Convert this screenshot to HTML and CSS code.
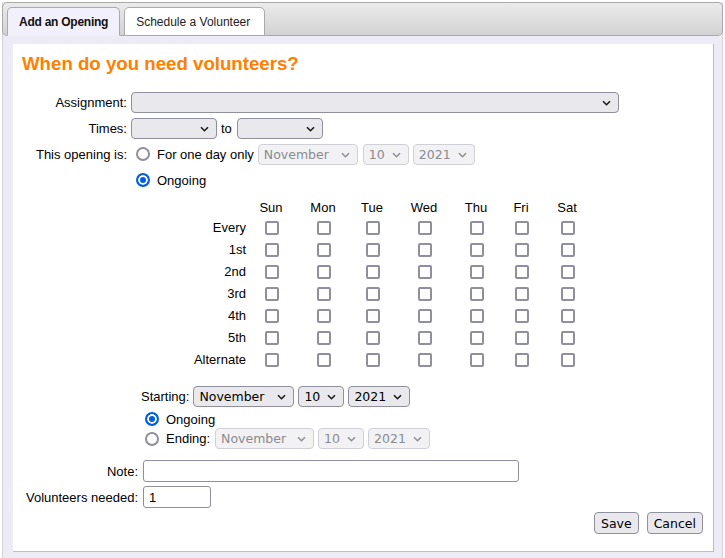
FILE: index.html
```html
<!DOCTYPE html>
<html>
<head>
<meta charset="utf-8">
<link rel="stylesheet" href="styles.css">
</head>
<body>
<div class="widget">
  <div class="tabbar">
    <div class="tab active">Add an Opening</div>
    <div class="tab">Schedule a Volunteer</div>
  </div>
  <div class="panel">
    <div class="card">
      <h2 class="title">When do you need volunteers?</h2>

      <div class="form-top">
        <label class="lbl">Assignment:</label>
        <div class="ctl">
          <span class="sel w-assign"><select><option></option></select><svg class="chev" width="9" height="6" viewBox="0 0 9 6"><path d="M1 1.2L4.5 4.7L8 1.2"/></svg></span>
        </div>

        <label class="lbl">Times:</label>
        <div class="ctl">
          <span class="sel w-time"><select><option></option></select><svg class="chev" width="9" height="6" viewBox="0 0 9 6"><path d="M1 1.2L4.5 4.7L8 1.2"/></svg></span>
          <span class="to">to</span>
          <span class="sel w-time"><select><option></option></select><svg class="chev" width="9" height="6" viewBox="0 0 9 6"><path d="M1 1.2L4.5 4.7L8 1.2"/></svg></span>
        </div>

        <label class="lbl">This opening is:</label>
        <div class="ctl">
          <input type="radio" name="kind" class="radio r-first">
          <span class="rtext">For one day only</span>
          <span class="sel w-month dis"><select disabled><option>November</option></select><svg class="chev" width="9" height="6" viewBox="0 0 9 6"><path d="M1 1.2L4.5 4.7L8 1.2"/></svg></span>
          <span class="sel w-day dis"><select disabled><option>10</option></select><svg class="chev" width="9" height="6" viewBox="0 0 9 6"><path d="M1 1.2L4.5 4.7L8 1.2"/></svg></span>
          <span class="sel w-year dis"><select disabled><option>2021</option></select><svg class="chev" width="9" height="6" viewBox="0 0 9 6"><path d="M1 1.2L4.5 4.7L8 1.2"/></svg></span>
        </div>

        <span></span>
        <div class="ctl">
          <input type="radio" name="kind" class="radio r-first" checked>
          <span class="rtext2">Ongoing</span>
        </div>
      </div>

      <div class="days">
        <span></span>
        <span class="dh">Sun</span><span class="dh">Mon</span><span class="dh">Tue</span><span class="dh">Wed</span><span class="dh">Thu</span><span class="dh">Fri</span><span class="dh">Sat</span>

        <span class="rl">Every</span>
        <span class="dc"><input type="checkbox" class="cb"></span><span class="dc"><input type="checkbox" class="cb"></span><span class="dc"><input type="checkbox" class="cb"></span><span class="dc"><input type="checkbox" class="cb"></span><span class="dc"><input type="checkbox" class="cb"></span><span class="dc"><input type="checkbox" class="cb"></span><span class="dc"><input type="checkbox" class="cb"></span>

        <span class="rl">1st</span>
        <span class="dc"><input type="checkbox" class="cb"></span><span class="dc"><input type="checkbox" class="cb"></span><span class="dc"><input type="checkbox" class="cb"></span><span class="dc"><input type="checkbox" class="cb"></span><span class="dc"><input type="checkbox" class="cb"></span><span class="dc"><input type="checkbox" class="cb"></span><span class="dc"><input type="checkbox" class="cb"></span>

        <span class="rl">2nd</span>
        <span class="dc"><input type="checkbox" class="cb"></span><span class="dc"><input type="checkbox" class="cb"></span><span class="dc"><input type="checkbox" class="cb"></span><span class="dc"><input type="checkbox" class="cb"></span><span class="dc"><input type="checkbox" class="cb"></span><span class="dc"><input type="checkbox" class="cb"></span><span class="dc"><input type="checkbox" class="cb"></span>

        <span class="rl">3rd</span>
        <span class="dc"><input type="checkbox" class="cb"></span><span class="dc"><input type="checkbox" class="cb"></span><span class="dc"><input type="checkbox" class="cb"></span><span class="dc"><input type="checkbox" class="cb"></span><span class="dc"><input type="checkbox" class="cb"></span><span class="dc"><input type="checkbox" class="cb"></span><span class="dc"><input type="checkbox" class="cb"></span>

        <span class="rl">4th</span>
        <span class="dc"><input type="checkbox" class="cb"></span><span class="dc"><input type="checkbox" class="cb"></span><span class="dc"><input type="checkbox" class="cb"></span><span class="dc"><input type="checkbox" class="cb"></span><span class="dc"><input type="checkbox" class="cb"></span><span class="dc"><input type="checkbox" class="cb"></span><span class="dc"><input type="checkbox" class="cb"></span>

        <span class="rl">5th</span>
        <span class="dc"><input type="checkbox" class="cb"></span><span class="dc"><input type="checkbox" class="cb"></span><span class="dc"><input type="checkbox" class="cb"></span><span class="dc"><input type="checkbox" class="cb"></span><span class="dc"><input type="checkbox" class="cb"></span><span class="dc"><input type="checkbox" class="cb"></span><span class="dc"><input type="checkbox" class="cb"></span>

        <span class="rl">Alternate</span>
        <span class="dc"><input type="checkbox" class="cb"></span><span class="dc"><input type="checkbox" class="cb"></span><span class="dc"><input type="checkbox" class="cb"></span><span class="dc"><input type="checkbox" class="cb"></span><span class="dc"><input type="checkbox" class="cb"></span><span class="dc"><input type="checkbox" class="cb"></span><span class="dc"><input type="checkbox" class="cb"></span>
      </div>

      <div class="starting">
        <span class="start-lbl">Starting:</span>
        <span class="sel w-month2"><select><option>November</option></select><svg class="chev" width="9" height="6" viewBox="0 0 9 6"><path d="M1 1.2L4.5 4.7L8 1.2"/></svg></span>
        <span class="sel w-day"><select><option>10</option></select><svg class="chev" width="9" height="6" viewBox="0 0 9 6"><path d="M1 1.2L4.5 4.7L8 1.2"/></svg></span>
        <span class="sel w-year"><select><option>2021</option></select><svg class="chev" width="9" height="6" viewBox="0 0 9 6"><path d="M1 1.2L4.5 4.7L8 1.2"/></svg></span>
      </div>

      <div class="endopts">
        <div class="endrow short">
          <input type="radio" name="end" class="radio" checked>
          <span class="etext">Ongoing</span>
        </div>
        <div class="endrow">
          <input type="radio" name="end" class="radio">
          <span class="etext">Ending:</span>
          <span class="sel w-month3 dis"><select disabled><option>November</option></select><svg class="chev" width="9" height="6" viewBox="0 0 9 6"><path d="M1 1.2L4.5 4.7L8 1.2"/></svg></span>
          <span class="sel w-day dis"><select disabled><option>10</option></select><svg class="chev" width="9" height="6" viewBox="0 0 9 6"><path d="M1 1.2L4.5 4.7L8 1.2"/></svg></span>
          <span class="sel w-year dis"><select disabled><option>2021</option></select><svg class="chev" width="9" height="6" viewBox="0 0 9 6"><path d="M1 1.2L4.5 4.7L8 1.2"/></svg></span>
        </div>
      </div>

      <div class="form-bottom">
        <label class="lbl">Note:</label>
        <div class="ctl"><input type="text" class="txt w-note"></div>
        <label class="lbl">Volunteers needed:</label>
        <div class="ctl"><input type="text" class="txt w-count" value="1"></div>
      </div>

      <div class="actions">
        <button class="btn">Save</button>
        <button class="btn">Cancel</button>
      </div>
    </div>
  </div>
</div>
</body>
</html>
```

FILE: styles.css
```css
html, body {
  margin: 0;
  padding: 0;
  background: #ffffff;
}
body {
  font-family: "Liberation Sans", Arial, sans-serif;
  font-size: 13px;
  color: #000;
}
.widget {
  margin: 2px 0 0 2px;
  width: 721px;
  box-sizing: border-box;
  border-left: 1px solid #d2d2d8;
  border-right: 1px solid #d2d2d8;
  background: #edebf5;
}
.tabbar {
  margin: 0 -1px;
  height: 34px;
  box-sizing: border-box;
  border: 1px solid #aaaaaa;
  border-radius: 5px;
  background: linear-gradient(#ebebeb, #d2d2d2);
  display: flex;
  align-items: flex-end;
  padding: 4px 0 0 4px;
  gap: 4px;
}
.tab {
  height: 29px;
  box-sizing: border-box;
  margin-bottom: -1px;
  border: 1px solid #aaaaaa;
  border-radius: 5px 5px 0 0;
  padding: 0 14px 0 11px;
  display: flex;
  align-items: center;
  font-size: 12px;
  color: #222;
  background: #ffffff;
  border-bottom-color: #aaaaaa;
}
.tab.active {
  background: #f2f0fa;
  font-weight: bold;
  border-bottom-color: #f2f0fa;
  color: #111;
  padding: 0 11px;
  letter-spacing: -0.25px;
}
.panel {
  padding: 8px 8px 12px 10px;
}
.card {
  background: #ffffff;
  border-right: 1px solid #bdbdc2;
  border-bottom: 1px solid #bdbdc2;
  padding: 8px 10px 17px 9px;
}
.title {
  margin: 1px 0 0 0;
  font-size: 18.67px;
  line-height: 22px;
  font-weight: bold;
  color: #ff8000;
}
.form-top {
  margin-top: 16px;
  display: grid;
  grid-template-columns: 105px 1fr;
  column-gap: 4px;
  row-gap: 4px;
  grid-auto-rows: 22px;
}
.lbl {
  text-align: right;
  display: flex;
  align-items: center;
  justify-content: flex-end;
  white-space: nowrap;
}
.ctl {
  display: flex;
  align-items: center;
}
.to {
  margin: 0 5px 0 4px;
}
.sel {
  position: relative;
  display: inline-flex;
  height: 21px;
}
.sel select {
  appearance: none;
  -webkit-appearance: none;
  width: 100%;
  height: 21px;
  margin: 0;
  box-sizing: border-box;
  border: 1px solid #8f8f9d;
  border-radius: 4px;
  background: #e9e9ed;
  color: #000;
  font-family: "DejaVu Sans", Verdana, sans-serif;
  font-size: 12.5px;
  padding: 0 18px 0 5px;
}
.sel .chev {
  position: absolute;
  right: 8px;
  top: 8px;
  pointer-events: none;
  fill: none;
  stroke: #1a1a1a;
  stroke-width: 1.6;
}
.sel.dis select {
  background: #f2f2f4;
  border-color: #d0d0d7;
  color: #8a8a90;
  opacity: 1;
}
.sel.dis .chev {
  stroke: #909096;
}
.w-assign { width: 488px; }
.w-time { width: 86px; }
.w-month { width: 100px; margin-right: 5px; }
.w-day { width: 46px; margin-right: 4px; }
.w-year { width: 62px; }
.w-month2 { width: 101px; margin-right: 4px; }
.w-month3 { width: 99px; margin-right: 4px; }

.radio {
  appearance: none;
  -webkit-appearance: none;
  width: 14px;
  height: 14px;
  margin: 0;
  box-sizing: border-box;
  border: 2px solid #8f8f9d;
  border-radius: 50%;
  background: #fff;
  flex: none;
}
.radio:checked {
  border-color: #0060df;
  background: #0060df;
  box-shadow: inset 0 0 0 2px #fff;
}
.r-first {
  margin-left: 5px;
}
.rtext {
  margin-left: 7px;
  margin-right: 4px;
}
.rtext2 {
  margin-left: 7px;
}

.days {
  margin: 7px 0 0 164px;
  display: grid;
  grid-template-columns: 60px 50px 54px 44px 60px 44px 46px 46px;
  grid-template-rows: 18px repeat(7, 22px);
  width: max-content;
}
.dh {
  display: flex;
  align-items: center;
  justify-content: center;
}
.rl {
  display: flex;
  align-items: center;
  justify-content: flex-end;
}
.dc {
  display: flex;
  align-items: center;
  justify-content: center;
}
.cb {
  appearance: none;
  -webkit-appearance: none;
  width: 14px;
  height: 14px;
  margin: 1px 0 0 1px;
  box-sizing: border-box;
  border: 2px solid #8f8f9d;
  border-radius: 2px;
  background: #fff;
}

.starting {
  margin: 16px 0 0 119px;
  display: flex;
  align-items: center;
  height: 21px;
}
.start-lbl {
  margin-right: 4px;
}
.endopts {
  margin: 3px 0 0 123px;
}
.endrow {
  display: flex;
  align-items: center;
  height: 21px;
}
.endrow.short {
  height: 18px;
}
.etext {
  margin-left: 7px;
  margin-right: 5px;
}

.form-bottom {
  margin-top: 11px;
  display: grid;
  grid-template-columns: 116px 1fr;
  column-gap: 5px;
  row-gap: 4px;
  grid-auto-rows: 22px;
}
.txt {
  height: 22px;
  box-sizing: border-box;
  border: 1px solid #8f8f9d;
  border-radius: 3px;
  margin: 0;
  padding: 0 5px;
  font-family: "Liberation Sans", Arial, sans-serif;
  font-size: 13px;
  background: #fff;
  color: #000;
}
.w-note { width: 376px; }
.w-count { width: 68px; }

.actions {
  margin-top: 4px;
  display: flex;
  justify-content: flex-end;
  gap: 8px;
}
.btn {
  height: 22px;
  box-sizing: border-box;
  border: 1px solid #8f8f9d;
  border-radius: 4px;
  background: #e9e9ed;
  color: #000;
  font-family: "DejaVu Sans", Verdana, sans-serif;
  font-size: 12.5px;
  padding: 0 6px;
  margin: 0;
}
```
